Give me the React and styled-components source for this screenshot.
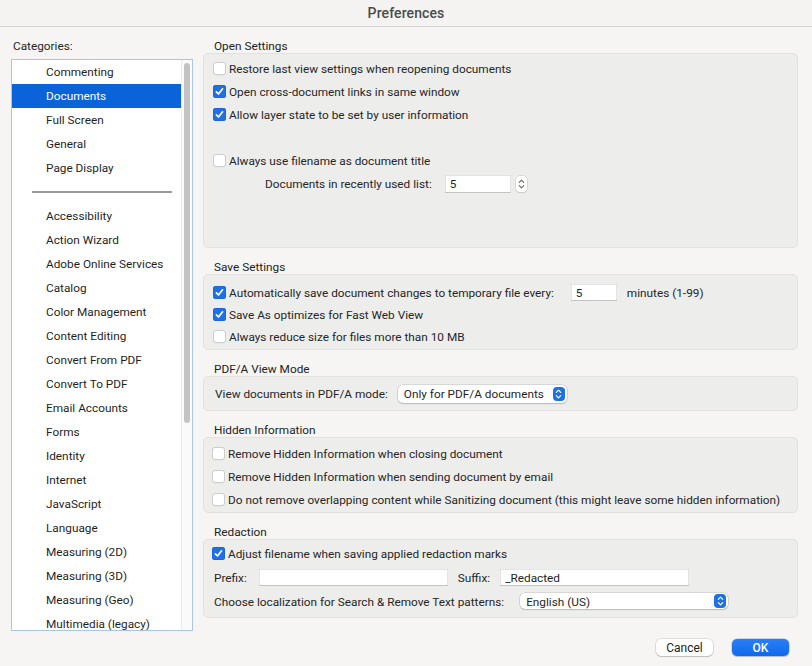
import React from "react";
import styled, { createGlobalStyle } from "styled-components";

const FS = "11.8px";

const Global = createGlobalStyle`
  html, body { margin: 0; padding: 0; background: #f6f5f4; }
  body { font-family: Roboto, "Liberation Sans", Arial, sans-serif; color: #262626; }
  * { box-sizing: border-box; }
`;

const Window = styled.div`
  width: 812px;
  height: 666px;
  display: flex;
  flex-direction: column;
  background: #f6f5f4;
  overflow: hidden;
`;

const TitleBar = styled.div`
  height: 27px;
  flex-shrink: 0;
  border-bottom: 1px solid #d4d3d2;
  background: #f4f3f2;
  display: flex;
  align-items: center;
  justify-content: center;
  padding-bottom: 1px;
  font-size: 14px;
  font-weight: 500;
  color: #4b4b4b;
  letter-spacing: 0.1px;
`;

const Body = styled.div`
  height: 604px;
  flex-shrink: 0;
  display: flex;
  gap: 10px;
  padding: 11px 14px 0 11px;
`;

const LeftCol = styled.div`
  width: 182px;
  display: flex;
  flex-direction: column;
`;

const Label = styled.div`
  height: 14px;
  line-height: 14px;
  font-size: ${FS};
  padding: 1px 0 0 2px;
  margin-bottom: 7px;
  color: #262626;
`;

const ListBox = styled.div`
  flex: 1;
  min-height: 0;
  display: flex;
  background: #fff;
  border: 1px solid #a9c5e7;
  overflow: hidden;
`;

const Items = styled.div`
  flex: 1;
  display: flex;
  flex-direction: column;
  overflow: hidden;
`;

const Item = styled.div`
  height: 24px;
  flex-shrink: 0;
  line-height: 25px;
  padding-left: 34px;
  font-size: ${FS};
  white-space: nowrap;
  color: ${(p) => (p.$selected ? "#fff" : "#1f1f1f")};
  background: ${(p) => (p.$selected ? "#0b63d9" : "transparent")};
`;

const SepRow = styled.div`
  height: 24px;
  flex-shrink: 0;
  display: flex;
  align-items: center;
  padding-left: 20px;
`;

const SepLine = styled.div`
  width: 140px;
  height: 2px;
  background: #9b9b9b;
`;

const ScrollTrack = styled.div`
  width: 11px;
  flex-shrink: 0;
  border-left: 1px solid #ebebeb;
  background: #fafafa;
  padding: 3px 2px;
`;

const Thumb = styled.div`
  width: 6px;
  height: 360px;
  border-radius: 3px;
  background: #c3c3c3;
`;

const RightCol = styled.div`
  flex: 1;
  display: flex;
  flex-direction: column;
  gap: 11px;
`;

const Section = styled.section`
  display: flex;
  flex-direction: column;
`;

const Header = styled.div`
  height: 15px;
  line-height: 14px;
  padding: 1px 0 0 11px;
  font-size: ${FS};
  color: #222;
`;

const Box = styled.div`
  background: #ededec;
  border: 1px solid #e2e1e0;
  border-radius: 5px;
  padding: ${(p) => p.$pad || "4px 0 1px"};
  height: ${(p) => (p.$h ? `${p.$h}px` : "auto")};
  display: flex;
  flex-direction: column;
`;

const Row = styled.div`
  height: ${(p) => p.$h || 23}px;
  display: flex;
  align-items: center;
  padding-left: ${(p) => p.$indent ?? 9}px;
  font-size: ${FS};
  color: #262626;
  white-space: nowrap;
`;

const CheckBoxEl = styled.span`
  width: 13px;
  height: 13px;
  flex-shrink: 0;
  border-radius: 3px;
  margin-right: 3px;
  display: inline-flex;
  align-items: center;
  justify-content: center;
  background: ${(p) => (p.$on ? "#1f6fe6" : "#fff")};
  box-shadow: ${(p) =>
    p.$on
      ? "inset 0 0 0 0.5px #1a5fcc"
      : "inset 0 0 0 1px #cdcdcd, 0 0.5px 0.5px rgba(0,0,0,0.06)"};
`;

const Text = styled.span`
  line-height: 14px;
  padding-top: 1px;
  margin-left: ${(p) => p.$ml || 0}px;
`;

const Field = styled.div`
  width: ${(p) => p.$w}px;
  height: ${(p) => p.$h || 17}px;
  margin-left: ${(p) => p.$ml || 0}px;
  background: #fff;
  box-shadow: inset 0 0 0 0.5px #c9c9c9, inset 0 -1px 0 #bdbdbd;
  display: flex;
  align-items: center;
  padding: 1px 0 0 5px;
  font-size: ${FS};
  color: #1f1f1f;
`;

const Spin = styled.span`
  width: 11px;
  height: 16px;
  margin-left: 5px;
  border-radius: 4px;
  background: #fff;
  box-shadow: 0 0 0 0.5px #c4c4c4, 0 1px 1px rgba(0, 0, 0, 0.12);
  display: inline-flex;
  align-items: center;
  justify-content: center;
`;

const Select = styled.div`
  width: ${(p) => p.$w}px;
  height: ${(p) => p.$h || 18}px;
  margin-left: ${(p) => p.$ml || 0}px;
  border-radius: 5px;
  background: #fff;
  box-shadow: 0 0 0 0.5px rgba(0, 0, 0, 0.18), 0 1px 1.5px rgba(0, 0, 0, 0.14);
  display: flex;
  align-items: center;
  justify-content: space-between;
  padding: 0 2px 0 6px;
  font-size: ${FS};
  color: #1f1f1f;
`;

const SelectArrow = styled.span`
  width: 12px;
  height: 14px;
  border-radius: 4px;
  background: #1f6fe9;
  display: inline-flex;
  align-items: center;
  justify-content: center;
`;

const Footer = styled.div`
  flex: 1;
  display: flex;
  justify-content: flex-end;
  align-items: flex-start;
  padding: 8px 23px 0 0;
  gap: 19px;
`;

const Button = styled.button`
  width: 57px;
  height: 17px;
  border: none;
  border-radius: 5px;
  padding: 1px 0 0;
  font-family: inherit;
  font-size: 12px;
  font-weight: ${(p) => (p.$primary ? 500 : 400)};
  color: ${(p) => (p.$primary ? "#fff" : "#222")};
  background: ${(p) =>
    p.$primary ? "linear-gradient(#2b7ff5, #0f69ec)" : "#fff"};
  box-shadow: ${(p) =>
    p.$primary
      ? "0 0 0 0.5px rgba(0,60,180,0.35), 0 1px 1px rgba(0,0,0,0.12)"
      : "0 0 0 0.5px rgba(0,0,0,0.18), 0 1px 1px rgba(0,0,0,0.14)"};
`;

const Check = ({ on }) => (
  <CheckBoxEl $on={on}>
    {on && (
      <svg width="11" height="11" viewBox="0 0 11 11">
        <path
          d="M2.4 5.8 L4.5 8 L8.6 2.8"
          fill="none"
          stroke="#fff"
          strokeWidth="1.7"
          strokeLinecap="round"
          strokeLinejoin="round"
        />
      </svg>
    )}
  </CheckBoxEl>
);

const Chevrons = ({ color, w = 7, h = 12 }) => (
  <svg width={w} height={h} viewBox="0 0 7 12">
    <path
      d="M1.3 4.3 L3.5 2.1 L5.7 4.3 M1.3 7.7 L3.5 9.9 L5.7 7.7"
      fill="none"
      stroke={color}
      strokeWidth="1.2"
      strokeLinecap="round"
      strokeLinejoin="round"
    />
  </svg>
);

const CheckRow = ({ on, children, indent, h }) => (
  <Row $indent={indent} $h={h}>
    <Check on={on} />
    <Text>{children}</Text>
  </Row>
);

const categories = [
  "Commenting",
  "Documents",
  "Full Screen",
  "General",
  "Page Display",
  "---",
  "Accessibility",
  "Action Wizard",
  "Adobe Online Services",
  "Catalog",
  "Color Management",
  "Content Editing",
  "Convert From PDF",
  "Convert To PDF",
  "Email Accounts",
  "Forms",
  "Identity",
  "Internet",
  "JavaScript",
  "Language",
  "Measuring (2D)",
  "Measuring (3D)",
  "Measuring (Geo)",
  "Multimedia (legacy)",
];

export default function App() {
  return (
    <>
      <Global />
      <Window>
        <TitleBar>Preferences</TitleBar>
        <Body>
          <LeftCol>
            <Label>Categories:</Label>
            <ListBox>
              <Items>
                {categories.map((c, i) =>
                  c === "---" ? (
                    <SepRow key={i}>
                      <SepLine />
                    </SepRow>
                  ) : (
                    <Item key={i} $selected={c === "Documents"}>
                      {c}
                    </Item>
                  )
                )}
              </Items>
              <ScrollTrack>
                <Thumb />
              </ScrollTrack>
            </ListBox>
          </LeftCol>

          <RightCol>
            <Section>
              <Header>Open Settings</Header>
              <Box $h={195} $pad="3px 0 0">
                <CheckRow on={false}>Restore last view settings when reopening documents</CheckRow>
                <CheckRow on>Open cross-document links in same window</CheckRow>
                <CheckRow on>Allow layer state to be set by user information</CheckRow>
                <Row />
                <CheckRow on={false}>Always use filename as document title</CheckRow>
                <Row>
                  <Text $ml={52}>Documents in recently used list:</Text>
                  <Field $w={66} $h={18} $ml={13}>5</Field>
                  <Spin>
                    <Chevrons color="#6a6a6a" w={7} h={12} />
                  </Spin>
                </Row>
              </Box>
            </Section>

            <Section>
              <Header>Save Settings</Header>
              <Box $pad="6px 0 2px">
                <Row $h={22}>
                  <Check on />
                  <Text>Automatically save document changes to temporary file every:</Text>
                  <Field $w={46} $ml={17}>5</Field>
                  <Text $ml={10}>minutes (1-99)</Text>
                </Row>
                <CheckRow on h={22}>Save As optimizes for Fast Web View</CheckRow>
                <CheckRow on={false} h={22}>Always reduce size for files more than 10 MB</CheckRow>
              </Box>
            </Section>

            <Section>
              <Header>PDF/A View Mode</Header>
              <Box $pad="5px 0 5px">
                <Row $indent={11}>
                  <Text>View documents in PDF/A mode:</Text>
                  <Select $w={169} $ml={10}>
                    <Text>Only for PDF/A documents</Text>
                    <SelectArrow>
                      <Chevrons color="#fff" w={7} h={12} />
                    </SelectArrow>
                  </Select>
                </Row>
              </Box>
            </Section>

            <Section>
              <Header>Hidden Information</Header>
              <Box $pad="4px 0 1px">
                <CheckRow on={false} indent={8}>Remove Hidden Information when closing document</CheckRow>
                <CheckRow on={false} indent={8}>Remove Hidden Information when sending document by email</CheckRow>
                <CheckRow on={false} indent={8}>
                  Do not remove overlapping content while Sanitizing document (this might leave some hidden information)
                </CheckRow>
              </Box>
            </Section>

            <Section>
              <Header>Redaction</Header>
              <Box $pad="1px 0 4px">
                <CheckRow on h={24} indent={8}>Adjust filename when saving applied redaction marks</CheckRow>
                <Row $h={24} $indent={10}>
                  <Text>Prefix:</Text>
                  <Field $w={189} $ml={12}></Field>
                  <Text $ml={10}>Suffix:</Text>
                  <Field $w={189} $ml={10}>_Redacted</Field>
                </Row>
                <Row $h={24} $indent={10}>
                  <Text>Choose localization for Search &amp; Remove Text patterns:</Text>
                  <Select $w={208} $h={16} $ml={16}>
                    <Text>English (US)</Text>
                    <SelectArrow>
                      <Chevrons color="#fff" w={7} h={12} />
                    </SelectArrow>
                  </Select>
                </Row>
              </Box>
            </Section>
          </RightCol>
        </Body>
        <Footer>
          <Button>Cancel</Button>
          <Button $primary>OK</Button>
        </Footer>
      </Window>
    </>
  );
}
